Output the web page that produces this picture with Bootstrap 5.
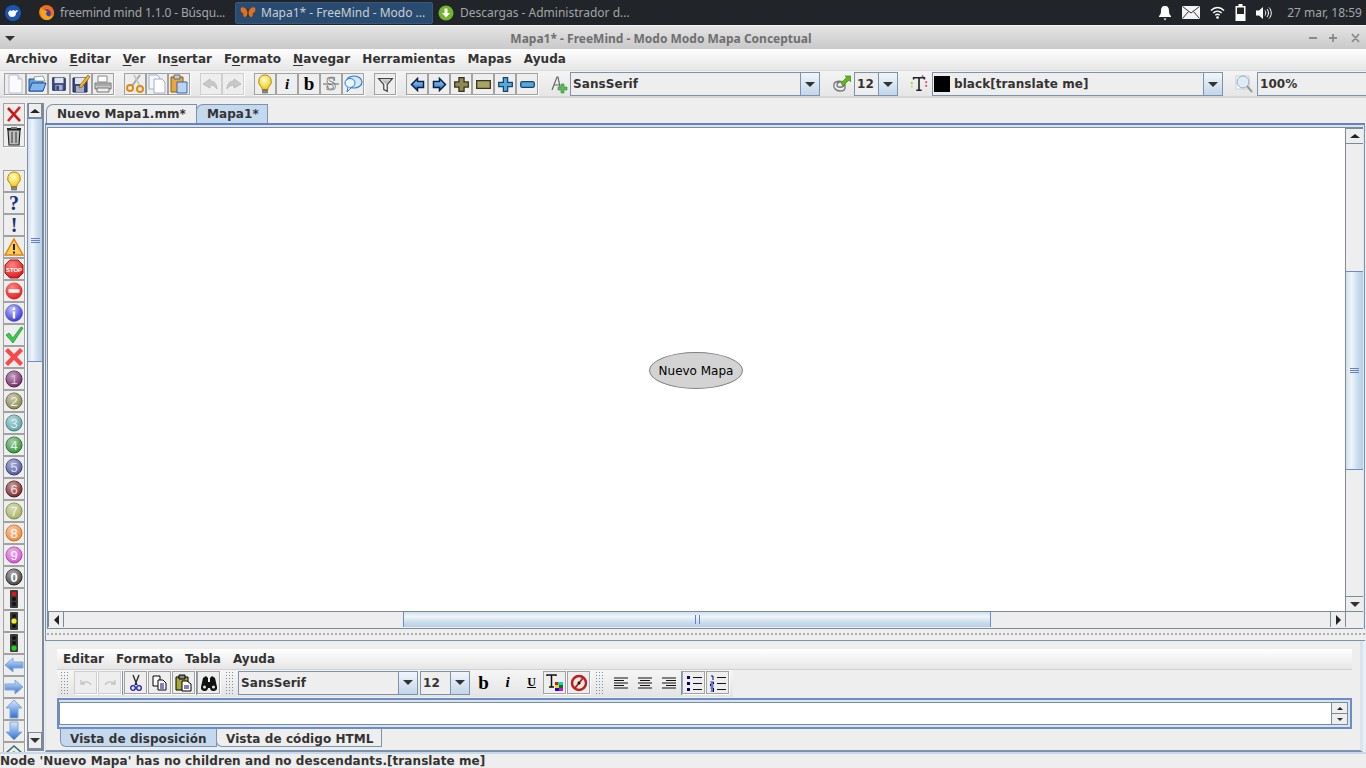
<!DOCTYPE html>
<html lang="es">

<head>
    <meta charset="utf-8">
    <title>Mapa1* - FreeMind</title>
    <link href="https://cdn.jsdelivr.net/npm/bootstrap@5.3.2/dist/css/bootstrap.min.css" rel="stylesheet">
    <style>
        html, body { width: 1366px; height: 768px; overflow: hidden; }
        body { background: #eee; color: #333; font: bold 12px/1 "DejaVu Sans", sans-serif; letter-spacing: .07px; }
        svg { display: block; }

        /* panel del escritorio */
        .desk-panel { height: 25px; background: #212529; color: #a3a6a8; font: 12px "Noto Sans", sans-serif; letter-spacing: 0; }
        .task-item { height: 25px; }
        .task-first { width: 197px; margin-left: 14px; padding-left: 2px; letter-spacing: -.14px; }
        .task-active { width: 198px; height: 22px; margin-left: 2px; padding-left: 4px; background: #2a4b70; border: 1px solid #35597f; border-radius: 2px; color: #c9ced3; }
        .task-last { margin-left: 5px; }
        .task-text { margin-left: 5px; white-space: nowrap; }
        .task-last .task-text { margin-left: 6px; }
        .tray { margin-left: auto; }
        .tray-time { margin: 0 4px 0 15px; }
        .tray-gap { margin-left: 10px; }

        /* ventana */
        .win-title { height: 24px; padding: 1px 44px 0 0; border-top: 1px solid #f4f4f4; background: linear-gradient(#e4e4e4, #c9c9c9); color: #6f6f6f; font: bold 12px "Noto Sans", sans-serif; letter-spacing: 0; position: relative; }
        .win-menu { position: absolute; left: 5px; top: 10px; border-top-color: #777; }
        .win-btns { position: absolute; right: 6px; top: 5px; }
        .main-menu { height: 21px; padding: 0 0 2px 6px; gap: 12px; background: linear-gradient(#fff, #e6e6e6); }
        .main-menu span u { text-underline-offset: 2px; }
        .main-tools { height: 28px; padding: 2px 0 0 4px; border-top: 1px solid #ddd; border-bottom: 2px solid #d6d6d6; background: linear-gradient(#f4f4f4, #e6e6e6); }
        .sq-btn { width: 22px; height: 22px; padding: 0; margin: 0; border: 1px solid #a2a2a2; border-radius: 0; background: #eee; box-shadow: 1px 1px 0 #fff; flex: none; color: #000; --bs-btn-active-border-color: #a2a2a2; }
        .sq-btn svg { margin: auto; }
        .sq-btn.flat { border-color: transparent; box-shadow: none; background: none; }
        .sq-btn.faint { border-color: #cfcfcf; }
        .gap-a { margin-left: 10px; }
        .serif-i { font: italic bold 15px "Liberation Serif", serif; }
        .serif-b { font: bold 19px/18px "Liberation Serif", serif; }
        .serif-u { font: bold 12px "Liberation Serif", serif; text-decoration: underline; }
        .mark-q { font: bold 20px/20px "Liberation Serif", serif; color: #16307a; overflow: hidden; }

        /* combos */
        .combo { height: 24px; margin-top: -1px; border: 1px solid #7c93ae; background: #eee; flex: none; padding-left: 2px; overflow: hidden; }
        .combo-arrow { width: 19px; height: 22px; margin-left: auto; flex: none; border-left: 1px solid #7c93ae; background: linear-gradient(#f1f6fb, #c3d6ea); }
        .combo-font { width: 250px; }
        .combo-size { width: 44px; margin-left: 2px; }
        .combo-color { width: 291px; margin-left: 2px; }
        .combo-zoom { width: 109px; margin-left: 2px; border-right: 0; }
        .swatch { width: 16px; height: 16px; margin: 0 4px 0 -1px; background: #000; }
        .tri { width: 0; height: 0; border-left: 5px solid transparent; border-right: 5px solid transparent; border-top: 5px solid #333; }
        .tri-up { border-top: 0; border-bottom: 4px solid #222; }
        .tri-left { border-left: 0; border-right: 5px solid #222; border-top: 5px solid transparent; border-bottom: 5px solid transparent; }
        .tri-right { border-right: 0; border-left: 5px solid #222; border-top: 5px solid transparent; border-bottom: 5px solid transparent; }

        /* zona de trabajo */
        .work { height: 654px; }
        .icon-col { width: 27px; padding: 5px 0 0 3px; overflow: hidden; flex: none; }
        .icon-space { height: 23px; flex: none; }
        .side-scroll { width: 17px; margin-top: 5px; height: 648px; border-left: 1px solid #7c93ae; border-right: 2px solid #7c8a99; border-bottom: 2px solid #7c8a99; flex: none; }
        .side-top { height: 15px; border-width: 1px 0 0 0; }
        .side-end { height: 17px; border-width: 1px 0 0 0; }
        .right-side { width: 1321px; padding-left: 1px; }

        .sb-btn { background: #eee; border: 1px solid #7c8a99; flex: none; }
        .vbar { width: 17px; flex: none; }
        .vbar .sb-btn { height: 16px; border-left: 0; border-right: 0; }
        .vthumb { background: linear-gradient(90deg, #cfdff0, #f0f5fa 30%, #c9dbee 70%, #b9cfe6); border-top: 1px solid #6d8ec4; border-bottom: 1px solid #6d8ec4; flex: none; }
        .side-thumb { height: 244px; }
        .map-thumb { height: 199px; margin-top: 127px; }
        .grip-v { width: 9px; height: 5px; border-top: 1px solid #6382bf; border-bottom: 1px solid #6382bf; position: relative; }
        .grip-h { width: 5px; height: 9px; border-left: 1px solid #6382bf; border-right: 1px solid #6382bf; }
        .grip-v::after { content: ""; position: absolute; left: 0; right: 0; top: 1px; border-top: 1px solid #6382bf; }

        .map-tabs { height: 19px; padding-left: 1px; margin-top: 6px; border: 0; flex-wrap: nowrap; }
        .map-tab { height: 19px; padding: 3px 10px 0; border: 1px solid #7c93ae; border-bottom: 0; border-top-left-radius: 7px; background: #eee; white-space: nowrap; }
        .tab-one { width: 151px; }
        .tab-two { width: 72px; margin-left: -1px; }
        .tab-on { background: #c5d9ee; }

        .map-frame { height: 506px; border-top: 2px solid #6382bf; background: #d8e4f1; padding: 2px 0 0 1px; border-left: 1px solid #7c93ae; border-right: 1px solid #7c93ae; }
        .map-inner { height: 502px; width: 1316px; border-top: 1px solid #7c8a99; border-left: 1px solid #7c8a99; border-bottom: 1px solid #7c8a99; background: #eee; }
        .map-canvas { width: 1298px; height: 484px; background: #fff; position: relative; flex: none; border-bottom: 1px solid #7c8a99; border-right: 1px solid #7c8a99; }
        .node-root { position: absolute; left: 601px; top: 224px; width: 94px; height: 37px; border: 1px solid #808080; border-radius: 50%; background: #d3d3d3; color: #000; font: 12px "DejaVu Sans", sans-serif; letter-spacing: 0; }
        .hbar { height: 16px; width: 1298px; background: #eee; }
        .hbar .sb-btn { width: 16px; border-top: 0; border-bottom: 0; height: 15px; }
        .hthumb { width: 588px; height: 15px; margin-left: 339px; background: linear-gradient(#cfdff0, #f0f5fa 30%, #c9dbee 70%, #b9cfe6); border-left: 1px solid #6d8ec4; border-right: 1px solid #6d8ec4; margin-right: auto; }

        .split-bar { height: 12px; border-bottom: 1px solid #7c93ae; background: radial-gradient(circle, #8a8a8a 0.6px, transparent 0.9px) 0 3px / 4px 4px repeat-x; border-left: 1px solid #7c93ae; }
        .edit-panel { height: 111px; width: 1318px; padding: 8px 0 0 11px; border-left: 1px solid #d8e4f1; border-right: 3px solid #d8e4f1; border-bottom: 2px solid #7c93ae; }
        .edit-menu { width: 1295px; height: 21px; padding: 0 0 1px 6px; gap: 12px; background: linear-gradient(#fff, #e6e6e6); border-bottom: 1px solid #d0d0d0; }
        .edit-tools { height: 27px; width: 676px; padding: 0 0 2px 3px; background: linear-gradient(#f6f6f6, #e4e4e4); }
        .edit-tools .sq-btn { width: 23px; height: 23px; margin-right: 1px; }
        .edit-tools .sq-btn.serif-u { margin-right: 0; }
        .edit-tools .combo { margin-top: 0; }
        .grip-dots { width: 10px; height: 24px; background: radial-gradient(circle, #7f8c99 0.7px, transparent 1px) 0 0 / 3px 3px; flex: none; }
        .rule-v { width: 1px; height: 24px; background: #7c93ae; flex: none; }
        .rule-wide { margin-right: 1px; }
        .combo-efont { width: 180px; margin: 0 2px 0 3px; }
        .combo-esize { width: 50px; margin-right: 2px; }
        .edit-box { width: 1295px; height: 31px; margin-top: 1px; border: 2px solid #6d8ec4; padding: 2px 2px 2px 0; background: #d8e4f1; }
        .edit-field { height: 23px; background: #fff; border: 1px solid #7c8a99; }
        .spin { width: 16px; margin-left: auto; border-left: 1px solid #7c8a99; background: #eee; }
        .spin-part { height: 11px; }
        .spin-part + .spin-part { border-top: 1px solid #7c8a99; }
        .spin-part .tri { border-left-width: 3px; border-right-width: 3px; }
        .spin-part .tri:not(.tri-up) { border-top-width: 3px; }
        .spin-part .tri-up { border-bottom-width: 3px; }
        .edit-tabs { padding-left: 3px; border: 0; flex-wrap: nowrap; }
        .edit-tab { height: 18px; padding: 4px 9px 0; border: 1px solid #7c93ae; border-top: 0; border-bottom-left-radius: 6px; background: #eee; white-space: nowrap; }
        .tab-lay { width: 157px; background: #c5d9ee; }
        .tab-code { width: 166px; margin-left: -1px; }

        .status-line { height: 16px; border-top: 2px solid #c9d9eb; padding-top: 1px; white-space: nowrap; }
    </style>
</head>

<body>
    <!-- iconos reutilizados -->
    <svg width="0" height="0" class="position-absolute">
        <defs>
            <linearGradient id="blueArrow" x1="0" y1="0" x2="0" y2="1"><stop offset="0" stop-color="#a9d4f7"/><stop offset="1" stop-color="#1c6fc9"/></linearGradient>
            <linearGradient id="paleBlue" x1="0" y1="0" x2="0" y2="1"><stop offset="0" stop-color="#dbe8fb"/><stop offset="1" stop-color="#2e6fd0"/></linearGradient>
            <radialGradient id="bulbGlow" cx=".45" cy=".35" r=".7"><stop offset="0" stop-color="#ffffd0"/><stop offset="1" stop-color="#f2c600"/></radialGradient>
            <radialGradient id="redBall" cx=".4" cy=".3" r=".8"><stop offset="0" stop-color="#ff8a80"/><stop offset="1" stop-color="#d80f12"/></radialGradient>
            <radialGradient id="blueBall" cx=".4" cy=".3" r=".8"><stop offset="0" stop-color="#c6c6ff"/><stop offset="1" stop-color="#2222d8"/></radialGradient>
            <radialGradient id="gloss" cx=".4" cy=".3" r=".7"><stop offset="0" stop-color="#fff" stop-opacity=".55"/><stop offset="1" stop-color="#fff" stop-opacity="0"/></radialGradient>

            <symbol id="i-new" viewBox="0 0 20 20"><path d="M4 1h9l4 4v14H4z" fill="#fbfbff" stroke="#b9bfd0"/><path d="M13 1v4h4" fill="#dfe3ee" stroke="#b9bfd0"/></symbol>
            <symbol id="i-open" viewBox="0 0 20 20"><path d="M2 5h6l1 2h7v10H2z" fill="#5f9fe0" stroke="#1d4f9a"/><path d="M7 3l9-1 2 5H8z" fill="#fff" stroke="#8aa"/><path d="M2 17l3-8h14l-3 8z" fill="#7fb4ec" stroke="#1d4f9a"/></symbol>
            <symbol id="i-save" viewBox="0 0 20 20"><path d="M3 3h13l1 1v13H3z" fill="#3a4a80" stroke="#1c2450"/><path d="M5 3h10v6H5z" fill="#dfe4f2"/><path d="M6 11h8v6H6z" fill="#a6aecb"/><path d="M7 12h3v5H7z" fill="#3a4a80"/></symbol>
            <symbol id="i-saveas" viewBox="0 0 20 20"><path d="M2 4h14v14H2z" fill="#3a4a80" stroke="#1c2450"/><path d="M4 4h10v6H4z" fill="#dfe4f2"/><path d="M5 12h8v6H5z" fill="#a6aecb"/><path d="M17 1l2 2-8 10-3 1 1-3z" fill="#f6b52a" stroke="#8a5a00" stroke-width=".7"/></symbol>
            <symbol id="i-print" viewBox="0 0 20 20"><path d="M5 2h9v6H5z" fill="#fff" stroke="#888"/><path d="M2 9h16v6H2z" fill="#c9c9c9" stroke="#777"/><path d="M4 14h12v4H4z" fill="#eee" stroke="#777"/><path d="M3 11h14" stroke="#888"/></symbol>
            <symbol id="i-cut" viewBox="0 0 20 20"><path d="M15 1L7 12" stroke="#a8a8a8" stroke-width="2"/><path d="M9 1l6 11" stroke="#c8c8c8" stroke-width="2"/><circle cx="5" cy="14" r="3" fill="none" stroke="#e08a10" stroke-width="2"/><circle cx="15" cy="15" r="3" fill="none" stroke="#e08a10" stroke-width="2"/></symbol>
            <symbol id="i-copy" viewBox="0 0 20 20"><path d="M2 1h8l3 3v11H2z" fill="#f6f6ff" stroke="#a6acc4"/><path d="M7 5h8l3 3v11H7z" fill="#fff" stroke="#a6acc4"/></symbol>
            <symbol id="i-paste" viewBox="0 0 20 20"><path d="M2 3h12v15H2z" fill="#e9a63c" stroke="#8a5a10"/><path d="M5 1h6v4H5z" fill="#c9c9d8" stroke="#667"/><path d="M8 8h10v11H8z" fill="#bcd4f4" stroke="#3a66a8"/></symbol>
            <symbol id="i-undo" viewBox="0 0 20 20"><path d="M9 5L2 10l7 4v-3c3 0 5 1 7 4 0-5-3-8-7-8z" fill="#c9c9c9" stroke="#bbb"/></symbol>
            <symbol id="i-redo" viewBox="0 0 20 20"><path d="M11 5l7 5-7 4v-3c-3 0-5 1-7 4 0-5 3-8 7-8z" fill="#c9c9c9" stroke="#bbb"/></symbol>
            <symbol id="i-bulb" viewBox="0 0 20 20"><path d="M10 1a6.500 6.500 0 0 0-4 11.500c1 1 1 2 1 3h6c0-1 0-2 1-3A6.500 6.500 0 0 0 10 1z" fill="url(#bulbGlow)" stroke="#b58a00"/><path d="M7.500 16h5v3h-5z" fill="#8d8d8d" stroke="#555" stroke-width=".6"/></symbol>
            <symbol id="i-bubble" viewBox="0 0 20 20"><ellipse cx="11" cy="8" rx="8" ry="6" fill="#d4e8fb" stroke="#2f7fd0" stroke-width="1.200"/><ellipse cx="7" cy="9" rx="5" ry="4.500" fill="#eaf4fd" stroke="#2f7fd0" stroke-width="1"/><path d="M5 13l-1 5 4-4" fill="#eaf4fd" stroke="#2f7fd0"/></symbol>
            <symbol id="i-filter" viewBox="0 0 20 20"><path d="M2 3h16l-6 7v8l-4-2v-6z" fill="#fff" stroke="#444" stroke-width="1.500"/><path d="M5 5h10l-4 5" fill="#bbb"/></symbol>
            <symbol id="i-left" viewBox="0 0 20 20"><path d="M2 10l8-8v4h8v8h-8v4z" fill="url(#blueArrow)" stroke="#0a1f44" stroke-width="2"/></symbol>
            <symbol id="i-right" viewBox="0 0 20 20"><path d="M18 10l-8-8v4H2v8h8v4z" fill="url(#blueArrow)" stroke="#0a1f44" stroke-width="2"/></symbol>
            <symbol id="i-plus-o" viewBox="0 0 20 20"><path d="M7 2h6v5h5v6h-5v5H7v-5H2V7h5z" fill="#8f8a52" stroke="#35331a" stroke-width="1.500"/></symbol>
            <symbol id="i-minus-o" viewBox="0 0 20 20"><path d="M2 5.500h16v9H2z" fill="#a9a463" stroke="#35331a" stroke-width="1.500"/></symbol>
            <symbol id="i-plus-b" viewBox="0 0 20 20"><path d="M7.500 2h5v5.500H18v5h-5.500V18h-5v-5.500H2v-5h5.500z" fill="#5aa6dc" stroke="#12466e" stroke-width="1.500"/></symbol>
            <symbol id="i-minus-b" viewBox="0 0 20 20"><rect x="2" y="6.500" width="16" height="7" rx="2" fill="#5aa6dc" stroke="#12466e" stroke-width="1.500"/></symbol>
            <symbol id="i-fonta" viewBox="0 0 20 20"><path d="M3 16L8 3h1l2 10M5 11h5" fill="none" stroke="#666" stroke-width="1.200"/><path d="M12 10h3v3h3v3h-3v3h-3v-3H9v-3h3z" fill="#5cb85c" stroke="#2f8f2f" stroke-width=".6"/></symbol>
            <symbol id="i-linka" viewBox="0 0 20 20"><path d="M13 9c-3-3-9-2-10 1-1 4 2 7 6 7 3 0 5-1 5-3V9c0-2-8-2-8 2 0 3 6 3 7 0" fill="none" stroke="#777" stroke-width="1.300"/><path d="M10 9l6-6-2-1h6v6l-2-2-6 6z" fill="#62b818" stroke="#2f7f0a" stroke-width=".6"/></symbol>
            <symbol id="i-tcolor" viewBox="0 0 20 20"><path d="M4 5V3h12v2M10 3v14M7 17h6" stroke="#222" stroke-width="1.800" fill="none"/><circle cx="2" cy="9" r="1.200" fill="#7be04c"/><circle cx="2" cy="13" r="1.200" fill="#d5e04c"/><circle cx="18" cy="8" r="1.200" fill="#e04c9a"/><circle cx="18" cy="12" r="1.200" fill="#e0504c"/><circle cx="14" cy="1.500" r="1.200" fill="#9a4ce0"/></symbol>
            <symbol id="i-zoom" viewBox="0 0 20 20"><path d="M2 2h13v13H2z" fill="#fff" stroke="#ccc"/><circle cx="9" cy="8" r="6" fill="#dcecf8" stroke="#9ab"/><path d="M13 12l5 6" stroke="#999" stroke-width="2"/></symbol>
            <symbol id="i-redx" viewBox="0 0 20 20"><path d="M4 4l12 13M16 3L4 17" stroke="#e01b1b" stroke-width="2.600"/><path d="M4 4l12 13" stroke="#222" stroke-width=".5"/></symbol>
            <symbol id="i-trash" viewBox="0 0 20 20"><path d="M4 4h12l-1 15H5z" fill="#bdbdbd" stroke="#222" stroke-width="1.200"/><path d="M3 3l14 0" stroke="#222" stroke-width="2"/><path d="M8 6v11M12 6v11" stroke="#333"/><path d="M7 2h6" stroke="#777" stroke-width="2"/></symbol>
            <symbol id="i-warn" viewBox="0 0 20 20"><path d="M10 2l9 16H1z" fill="#ffcf4a" stroke="#e0801a" stroke-width="1.500"/><path d="M10 7v6" stroke="#222" stroke-width="2"/><path d="M10 14.500v2" stroke="#222" stroke-width="2"/></symbol>
            <symbol id="i-stop" viewBox="0 0 20 20"><path d="M6 1h8l5 5v8l-5 5H6l-5-5V6z" fill="url(#redBall)" stroke="#b01010"/><text x="10" y="12.500" font-size="6" font-weight="bold" fill="#fff" text-anchor="middle" font-family="Liberation Sans">STOP</text></symbol>
            <symbol id="i-noentry" viewBox="0 0 20 20"><circle cx="10" cy="10" r="8.500" fill="url(#redBall)"/><path d="M4.500 8.300h11v3.400h-11z" fill="#fff"/></symbol>
            <symbol id="i-info" viewBox="0 0 20 20"><circle cx="10" cy="10" r="8.500" fill="url(#blueBall)" stroke="#4040a0" stroke-width=".5"/><path d="M8.800 8.500h2.400v7H8.800zM8.800 4.500h2.400v2.400H8.800z" fill="#fff"/></symbol>
            <symbol id="i-check" viewBox="0 0 20 20"><path d="M2 10l3-2 4 5L17 2l2 1L9 18z" fill="#3cc94c" stroke="#1a8a2a" stroke-width=".7"/></symbol>
            <symbol id="i-crossr" viewBox="0 0 20 20"><path d="M4 1l6 6 6-6 3 3-6 6 6 6-3 3-6-6-6 6-3-3 6-6-6-6z" fill="#f64a4a" stroke="#ff8f8f" stroke-width=".5"/></symbol>
            <symbol id="i-tl" viewBox="0 0 20 20"><rect x="6" y="1" width="8" height="18" rx="1" fill="#3a3a3a"/></symbol>
            <symbol id="i-aleft" viewBox="0 0 20 20"><path d="M1 10l8-7v4h10v6H9v4z" fill="url(#paleBlue)" stroke="#7fa8e0"/></symbol>
            <symbol id="i-aright" viewBox="0 0 20 20"><path d="M19 10l-8-7v4H1v6h10v4z" fill="url(#paleBlue)" stroke="#7fa8e0"/></symbol>
            <symbol id="i-aup" viewBox="0 0 20 20"><path d="M10 1l8 8h-4v10H6V9H2z" fill="url(#paleBlue)" stroke="#7fa8e0"/></symbol>
            <symbol id="i-adown" viewBox="0 0 20 20"><path d="M10 19l8-8h-4V1H6v10H2z" fill="url(#paleBlue)" stroke="#7fa8e0"/></symbol>
            <symbol id="i-ecut" viewBox="0 0 18 18"><path d="M6 1l4 10M12 1L8 11" stroke="#222" stroke-width="1.300"/><circle cx="6" cy="14" r="2.300" fill="none" stroke="#1c1cb0" stroke-width="1.300"/><circle cx="12" cy="14" r="2.300" fill="none" stroke="#1c1cb0" stroke-width="1.300"/></symbol>
            <symbol id="i-ecopy" viewBox="0 0 18 18"><path d="M2 2h7v10H2z" fill="#fff" stroke="#000"/><path d="M7 6h5l3 3v7H7z" fill="#fff" stroke="#000"/><path d="M9 10h4M9 12h4M9 14h4" stroke="#00007f"/></symbol>
            <symbol id="i-epaste" viewBox="0 0 18 18"><path d="M1 3h12v13H1z" fill="#a8a838" stroke="#000"/><path d="M4 1h6v4H4z" fill="#888" stroke="#000"/><path d="M7 7h5l4 3v7H7z" fill="#fff" stroke="#000"/><path d="M9 12h5M9 14h5" stroke="#00007f"/></symbol>
            <symbol id="i-find" viewBox="0 0 18 18"><path d="M3 4l3-2 2 2v4h2V4l2-2 3 2 2 9a3 3 0 0 1-7 1h-2a3 3 0 0 1-7-1z" fill="#111"/><circle cx="4.500" cy="13" r="1.600" fill="#ddd"/><circle cx="13.500" cy="13" r="1.600" fill="#ddd"/></symbol>
            <symbol id="i-eundo" viewBox="0 0 18 18"><path d="M4 6v4h4M4 10c2-3 8-3 10 1" fill="none" stroke="#c4c4c4" stroke-width="1.300"/></symbol>
            <symbol id="i-eredo" viewBox="0 0 18 18"><path d="M14 6v4h-4M14 10c-2-3-8-3-10 1" fill="none" stroke="#c4c4c4" stroke-width="1.300"/></symbol>
            <symbol id="i-etcol" viewBox="0 0 20 20"><path d="M2 3V2h9v1M6.500 2v12M4 14h5" stroke="#111" stroke-width="1.500" fill="none"/><path d="M10 9h3v3h-3z" fill="#e01010"/><path d="M13 9h5v3h-5z" fill="#10d0d0"/><path d="M10 12h4v3h-4z" fill="#e0e010"/><path d="M14 12h4v3h-4z" fill="#107010"/><path d="M10 15h4v3h-4z" fill="#1010c0"/><path d="M14 15h4v3h-4z" fill="#d010d0"/></symbol>
            <symbol id="i-eno" viewBox="0 0 20 20"><circle cx="10" cy="10" r="7" fill="#f4e9e0" stroke="#b82020" stroke-width="2.500"/><path d="M6 15L14 5" stroke="#b82020" stroke-width="2"/><path d="M9 9l2 2" stroke="#111" stroke-width="2"/></symbol>
            <symbol id="i-al" viewBox="0 0 18 18"><path d="M2 4h14M2 6.500h10M2 9h14M2 11.500h10M2 14h14" stroke="#111" stroke-width="1.100"/></symbol>
            <symbol id="i-ac" viewBox="0 0 18 18"><path d="M2 4h14M4 6.500h10M2 9h14M4 11.500h10M2 14h14" stroke="#111" stroke-width="1.100"/></symbol>
            <symbol id="i-ar" viewBox="0 0 18 18"><path d="M2 4h14M6 6.500h10M2 9h14M6 11.500h10M2 14h14" stroke="#111" stroke-width="1.100"/></symbol>
            <symbol id="i-ul" viewBox="0 0 18 18"><path d="M2 2h3v3H2zM2 8h3v3H2zM2 14h3v3H2z" fill="#00007f"/><path d="M8 3.500h9M8 9.500h9M8 15.500h9" stroke="#111" stroke-width="1.100"/></symbol>
            <symbol id="i-ol" viewBox="0 0 18 18"><path d="M2 2h2v4M1.500 8h3v2h-3v2h3M1.500 14h3v4h-3M2 16h2" fill="none" stroke="#00007f"/><path d="M8 3.500h9M8 9.500h9M8 15.500h9" stroke="#111" stroke-width="1.100"/></symbol>
        </defs>
    </svg>

    <div class="desk-panel d-flex align-items-center">
        <svg class="ms-1" width="18" height="18" viewBox="0 0 18 18"><circle cx="9" cy="9" r="8" fill="#1b57b0"/><path d="M4 9l2-3 1 1 3-1 1 1 2-1 1 1-2 2c0 3-2 4-4 4-2 0-3-1-4-4z" fill="#fff"/></svg>
        <div class="task-item task-first d-flex align-items-center">
            <svg width="17" height="17" viewBox="0 0 18 18"><circle cx="9" cy="9" r="8" fill="#f26a1b"/><circle cx="9" cy="10" r="4.500" fill="#3a3fae"/><path d="M3 4c-2 5 0 12 6 13 5 0 8-4 8-8-1 4-4 5-6 4-3-1-3-4-1-5-2-2-4-1-7-4z" fill="#f4a21c"/></svg>
            <span class="task-text">freemind mind 1.1.0 - Búsqu...</span>
        </div>
        <div class="task-active d-flex align-items-center">
            <svg width="16" height="13" viewBox="0 0 18 14"><path d="M9 7C7 2 3 0 1 2c-1 3 1 6 3 6-1 2 0 4 2 4 2-1 3-3 3-5zM9 7c2-5 6-7 8-5 1 3-1 6-3 6 1 2 0 4-2 4-2-1-3-3-3-5z" fill="#e8701a"/><path d="M9 3v9" stroke="#222"/></svg>
            <span class="task-text">Mapa1* - FreeMind - Modo ...</span>
        </div>
        <div class="task-last d-flex align-items-center">
            <svg width="16" height="16" viewBox="0 0 16 16"><circle cx="8" cy="8" r="7.500" fill="#70b52a"/><path d="M6.500 3.500h3V8H12l-4 4.500L4 8h2.500z" fill="#fff"/></svg>
            <span class="task-text">Descargas - Administrador d...</span>
        </div>
        <div class="tray d-flex align-items-center">
            <svg width="14" height="16" viewBox="0 0 14 16"><path d="M7 1c3 0 4 2 4 5 0 3 1 4 2 5v1H1v-1c1-1 2-2 2-5 0-3 1-5 4-5zM5.500 13.500h3L7 15.500z" fill="#fff"/></svg>
            <svg class="tray-gap" width="18" height="13" viewBox="0 0 18 13"><path d="M0 0h18v13H0z" fill="#f4f4f4"/><path d="M.500.500L9 7l8.500-6.500M.500 12.500L6.500 5.500M17.500 12.500l-6-7" fill="none" stroke="#333"/></svg>
            <svg class="tray-gap" width="15" height="13" viewBox="0 0 15 13"><path d="M1 4.500c4-4 9-4 13 0M3.200 7c2.500-2.500 6-2.500 8.500 0M5.300 9.200c1.300-1.200 3-1.200 4.300 0" fill="none" stroke="#fff" stroke-width="1.500"/><circle cx="7.500" cy="11.500" r="1.300" fill="#fff"/></svg>
            <svg class="tray-gap" width="11" height="17" viewBox="0 0 11 17"><path d="M3.500 0h4v2h3v15H.500V2h3z" fill="#fff"/><path d="M2 3.500h7V10H2z" fill="#212529"/></svg>
            <svg class="tray-gap" width="16" height="14" viewBox="0 0 16 14"><path d="M0 4.500h3L7 1v12L3 9.500H0z" fill="#fff"/><path d="M9 4.500c1 1.500 1 3.500 0 5M11 3c2 2.500 2 5.500 0 8M13 1.500c3 3 3 8 0 11" fill="none" stroke="#fff"/></svg>
            <span class="tray-time">27 mar, 18:59</span>
        </div>
    </div>

    <div class="win-title d-flex align-items-center justify-content-center">
        <span class="win-menu tri"></span>
        <span>Mapa1* - FreeMind - Modo Modo Mapa Conceptual</span>
        <svg class="win-btns" width="52" height="14" viewBox="0 0 52 14"><path d="M1 7h8M21 7h8M25 3v8M44 3l7 8M51 3l-7 8" stroke="#8a8a8a" stroke-width="1.800"/></svg>
    </div>

    <nav class="main-menu d-flex align-items-center">
        <span>Archivo</span><span><u>E</u>ditar</span><span><u>V</u>er</span><span>In<u>s</u>ertar</span><span>F<u>o</u>rmato</span><span><u>N</u>avegar</span><span>Herramientas</span><span>Mapas</span><span>Ayuda</span>
    </nav>

    <div class="main-tools d-flex">
        <button class="btn sq-btn"><svg width="20" height="20"><use href="#i-new"/></svg></button>
        <button class="btn sq-btn"><svg width="20" height="20"><use href="#i-open"/></svg></button>
        <button class="btn sq-btn"><svg width="18" height="18"><use href="#i-save"/></svg></button>
        <button class="btn sq-btn"><svg width="20" height="20"><use href="#i-saveas"/></svg></button>
        <button class="btn sq-btn"><svg width="20" height="20"><use href="#i-print"/></svg></button>
        <button class="btn sq-btn gap-a"><svg width="20" height="20"><use href="#i-cut"/></svg></button>
        <button class="btn sq-btn"><svg width="20" height="20"><use href="#i-copy"/></svg></button>
        <button class="btn sq-btn"><svg width="20" height="20"><use href="#i-paste"/></svg></button>
        <button class="btn sq-btn faint gap-a"><svg width="20" height="20"><use href="#i-undo"/></svg></button>
        <button class="btn sq-btn faint"><svg width="20" height="20"><use href="#i-redo"/></svg></button>
        <button class="btn sq-btn gap-a"><svg width="20" height="20"><use href="#i-bulb"/></svg></button>
        <button class="btn sq-btn serif-i">i</button>
        <button class="btn sq-btn serif-b">b</button>
        <button class="btn sq-btn"><svg width="20" height="20" viewBox="0 0 20 20"><text x="10" y="16" font-size="18" font-family="Liberation Serif" font-weight="bold" text-anchor="middle" fill="#fff" stroke="#666" stroke-width=".7">S</text><path d="M2 10h16" stroke="#666"/></svg></button>
        <button class="btn sq-btn"><svg width="20" height="20"><use href="#i-bubble"/></svg></button>
        <button class="btn sq-btn gap-a"><svg width="17" height="17"><use href="#i-filter"/></svg></button>
        <button class="btn sq-btn gap-a"><svg width="15" height="15"><use href="#i-left"/></svg></button>
        <button class="btn sq-btn"><svg width="15" height="15"><use href="#i-right"/></svg></button>
        <button class="btn sq-btn"><svg width="17" height="17"><use href="#i-plus-o"/></svg></button>
        <button class="btn sq-btn"><svg width="17" height="17"><use href="#i-minus-o"/></svg></button>
        <button class="btn sq-btn"><svg width="17" height="17"><use href="#i-plus-b"/></svg></button>
        <button class="btn sq-btn"><svg width="17" height="17"><use href="#i-minus-b"/></svg></button>
        <button class="btn sq-btn flat gap-a"><svg width="20" height="20"><use href="#i-fonta"/></svg></button>
        <div class="combo combo-font d-flex align-items-center"><span>SansSerif</span><span class="combo-arrow d-flex align-items-center justify-content-center"><span class="tri"></span></span></div>
        <button class="btn sq-btn flat gap-a"><svg width="20" height="20"><use href="#i-linka"/></svg></button>
        <div class="combo combo-size d-flex align-items-center"><span>12</span><span class="combo-arrow d-flex align-items-center justify-content-center"><span class="tri"></span></span></div>
        <button class="btn sq-btn flat gap-a"><svg width="18" height="18"><use href="#i-tcolor"/></svg></button>
        <div class="combo combo-color d-flex align-items-center"><span class="swatch"></span><span>black[translate me]</span><span class="combo-arrow d-flex align-items-center justify-content-center"><span class="tri"></span></span></div>
        <button class="btn sq-btn flat gap-a"><svg width="20" height="20"><use href="#i-zoom"/></svg></button>
        <div class="combo combo-zoom d-flex align-items-center"><span>100%</span></div>
    </div>

    <div class="work d-flex">
        <div class="icon-col d-flex flex-column">
            <button class="btn sq-btn"><svg width="20" height="20"><use href="#i-redx"/></svg></button>
            <button class="btn sq-btn"><svg width="20" height="20"><use href="#i-trash"/></svg></button>
            <div class="icon-space"></div>
            <button class="btn sq-btn"><svg width="20" height="20"><use href="#i-bulb"/></svg></button>
            <button class="btn sq-btn mark-q">?</button>
            <button class="btn sq-btn mark-q">!</button>
            <button class="btn sq-btn"><svg width="20" height="20"><use href="#i-warn"/></svg></button>
            <button class="btn sq-btn"><svg width="20" height="20"><use href="#i-stop"/></svg></button>
            <button class="btn sq-btn"><svg width="20" height="20"><use href="#i-noentry"/></svg></button>
            <button class="btn sq-btn"><svg width="20" height="20"><use href="#i-info"/></svg></button>
            <button class="btn sq-btn"><svg width="20" height="20"><use href="#i-check"/></svg></button>
            <button class="btn sq-btn"><svg width="20" height="20"><use href="#i-crossr"/></svg></button>
            <button class="btn sq-btn"><svg width="20" height="20" viewBox="0 0 20 20"><circle cx="10" cy="10" r="8" fill="#7a2f72" stroke="#4a1c48"/><circle cx="10" cy="10" r="8" fill="url(#gloss)"/><text x="10" y="15" font-size="13" text-anchor="middle" fill="#d8c0d8" font-family="Liberation Sans">1</text></svg></button>
            <button class="btn sq-btn"><svg width="20" height="20" viewBox="0 0 20 20"><circle cx="10" cy="10" r="8" fill="#8f8a5a" stroke="#5f5c38"/><circle cx="10" cy="10" r="8" fill="url(#gloss)"/><text x="10" y="15" font-size="13" text-anchor="middle" fill="#f4f0d8" font-family="Liberation Sans">2</text></svg></button>
            <button class="btn sq-btn"><svg width="20" height="20" viewBox="0 0 20 20"><circle cx="10" cy="10" r="8" fill="#62a6ac" stroke="#3e7a80"/><circle cx="10" cy="10" r="8" fill="url(#gloss)"/><text x="10" y="15" font-size="13" text-anchor="middle" fill="#d8f0f0" font-family="Liberation Sans">3</text></svg></button>
            <button class="btn sq-btn"><svg width="20" height="20" viewBox="0 0 20 20"><circle cx="10" cy="10" r="8" fill="#3c9442" stroke="#1f6a26"/><circle cx="10" cy="10" r="8" fill="url(#gloss)"/><text x="10" y="15" font-size="13" text-anchor="middle" fill="#e0f4e0" font-family="Liberation Sans">4</text></svg></button>
            <button class="btn sq-btn"><svg width="20" height="20" viewBox="0 0 20 20"><circle cx="10" cy="10" r="8" fill="#555a9e" stroke="#343878"/><circle cx="10" cy="10" r="8" fill="url(#gloss)"/><text x="10" y="15" font-size="13" text-anchor="middle" fill="#dcdcf4" font-family="Liberation Sans">5</text></svg></button>
            <button class="btn sq-btn"><svg width="20" height="20" viewBox="0 0 20 20"><circle cx="10" cy="10" r="8" fill="#7c2c30" stroke="#501418"/><circle cx="10" cy="10" r="8" fill="url(#gloss)"/><text x="10" y="15" font-size="13" text-anchor="middle" fill="#f4dcdc" font-family="Liberation Sans">6</text></svg></button>
            <button class="btn sq-btn"><svg width="20" height="20" viewBox="0 0 20 20"><circle cx="10" cy="10" r="8" fill="#a8b468" stroke="#7a8444"/><circle cx="10" cy="10" r="8" fill="url(#gloss)"/><text x="10" y="15" font-size="13" text-anchor="middle" fill="#f4f8dc" font-family="Liberation Sans">7</text></svg></button>
            <button class="btn sq-btn"><svg width="20" height="20" viewBox="0 0 20 20"><circle cx="10" cy="10" r="8" fill="#f08a3c" stroke="#d06a20"/><circle cx="10" cy="10" r="8" fill="url(#gloss)"/><text x="10" y="15" font-size="13" text-anchor="middle" fill="#fff" font-family="Liberation Sans">8</text></svg></button>
            <button class="btn sq-btn"><svg width="20" height="20" viewBox="0 0 20 20"><circle cx="10" cy="10" r="8" fill="#d45cd0" stroke="#b03cac"/><circle cx="10" cy="10" r="8" fill="url(#gloss)"/><text x="10" y="15" font-size="13" text-anchor="middle" fill="#fff" font-family="Liberation Sans">9</text></svg></button>
            <button class="btn sq-btn"><svg width="20" height="20" viewBox="0 0 20 20"><circle cx="10" cy="10" r="8" fill="#4a4a4a" stroke="#222"/><circle cx="10" cy="10" r="8" fill="url(#gloss)"/><text x="10" y="15" font-size="13" font-weight="bold" text-anchor="middle" fill="#fff" font-family="Liberation Sans">0</text></svg></button>
            <button class="btn sq-btn"><svg width="20" height="20"><use href="#i-tl"/><circle cx="10" cy="5" r="2.300" fill="#f01010"/><circle cx="10" cy="10" r="2" fill="#111"/><circle cx="10" cy="15" r="2" fill="#111"/></svg></button>
            <button class="btn sq-btn"><svg width="20" height="20"><use href="#i-tl"/><circle cx="10" cy="5" r="2" fill="#111"/><circle cx="10" cy="10" r="2.600" fill="#f0f020"/><circle cx="10" cy="15" r="2" fill="#111"/></svg></button>
            <button class="btn sq-btn"><svg width="20" height="20"><use href="#i-tl"/><circle cx="10" cy="5" r="2" fill="#111"/><circle cx="10" cy="10" r="2" fill="#111"/><circle cx="10" cy="15" r="2.600" fill="#20d020"/></svg></button>
            <button class="btn sq-btn"><svg width="20" height="20"><use href="#i-aleft"/></svg></button>
            <button class="btn sq-btn"><svg width="20" height="20"><use href="#i-aright"/></svg></button>
            <button class="btn sq-btn"><svg width="20" height="20"><use href="#i-aup"/></svg></button>
            <button class="btn sq-btn"><svg width="20" height="20"><use href="#i-adown"/></svg></button>
            <button class="btn sq-btn"><svg width="20" height="20" viewBox="0 0 20 20"><path d="M2 10l8-7 8 7M5 14l5-5 5 5" fill="none" stroke="#2f6f5f" stroke-width="1.500"/></svg></button>
        </div>

        <div class="side-scroll d-flex flex-column">
            <div class="sb-btn d-flex align-items-center justify-content-center side-top"><span class="tri tri-up"></span></div>
            <div class="vthumb side-thumb d-flex align-items-center justify-content-center"><span class="grip-v"></span></div>
            <div class="flex-grow-1"></div>
            <div class="sb-btn d-flex align-items-center justify-content-center side-end"><span class="tri"></span></div>
        </div>

        <div class="right-side d-flex flex-column">
            <div class="nav nav-tabs map-tabs">
                <div class="map-tab tab-one">Nuevo Mapa1.mm*</div>
                <div class="map-tab tab-two tab-on">Mapa1*</div>
            </div>
            <div class="map-frame">
                <div class="map-inner">
                    <div class="d-flex">
                        <div class="map-canvas">
                            <div class="node-root d-flex align-items-center justify-content-center">Nuevo Mapa</div>
                        </div>
                        <div class="vbar d-flex flex-column">
                            <div class="sb-btn d-flex align-items-center justify-content-center"><span class="tri tri-up"></span></div>
                            <div class="vthumb map-thumb d-flex align-items-center justify-content-center"><span class="grip-v"></span></div>
                            <div class="flex-grow-1"></div>
                            <div class="sb-btn d-flex align-items-center justify-content-center"><span class="tri"></span></div>
                        </div>
                    </div>
                    <div class="hbar d-flex">
                        <div class="sb-btn d-flex align-items-center justify-content-center"><span class="tri tri-left"></span></div>
                        <div class="hthumb d-flex align-items-center justify-content-center"><span class="grip-h"></span></div>
                        <div class="sb-btn d-flex align-items-center justify-content-center"><span class="tri tri-right"></span></div>
                    </div>
                </div>
            </div>
            <div class="split-bar"></div>
            <div class="edit-panel">
                <nav class="edit-menu d-flex align-items-center"><span>Editar</span><span>Formato</span><span>Tabla</span><span>Ayuda</span></nav>
                <div class="edit-tools d-flex align-items-center">
                    <span class="grip-dots"></span>
                    <button class="btn sq-btn faint ms-1"><svg width="18" height="18"><use href="#i-eundo"/></svg></button>
                    <button class="btn sq-btn faint"><svg width="18" height="18"><use href="#i-eredo"/></svg></button>
                    <span class="rule-v rule-wide"></span>
                    <button class="btn sq-btn"><svg width="18" height="18"><use href="#i-ecut"/></svg></button>
                    <button class="btn sq-btn"><svg width="18" height="18"><use href="#i-ecopy"/></svg></button>
                    <button class="btn sq-btn"><svg width="18" height="18"><use href="#i-epaste"/></svg></button>
                    <span class="rule-v"></span>
                    <button class="btn sq-btn"><svg width="18" height="18"><use href="#i-find"/></svg></button>
                    <span class="grip-dots ms-1"></span>
                    <div class="combo combo-efont d-flex align-items-center"><span>SansSerif</span><span class="combo-arrow d-flex align-items-center justify-content-center"><span class="tri"></span></span></div>
                    <div class="combo combo-esize d-flex align-items-center"><span>12</span><span class="combo-arrow d-flex align-items-center justify-content-center"><span class="tri"></span></span></div>
                    <button class="btn sq-btn flat serif-b">b</button>
                    <button class="btn sq-btn flat serif-i">i</button>
                    <button class="btn sq-btn flat serif-u">U</button>
                    <button class="btn sq-btn"><svg width="20" height="20"><use href="#i-etcol"/></svg></button>
                    <button class="btn sq-btn"><svg width="20" height="20"><use href="#i-eno"/></svg></button>
                    <span class="grip-dots ms-1"></span>
                    <button class="btn sq-btn flat ms-1"><svg width="18" height="18"><use href="#i-al"/></svg></button>
                    <button class="btn sq-btn flat"><svg width="18" height="18"><use href="#i-ac"/></svg></button>
                    <button class="btn sq-btn flat"><svg width="18" height="18"><use href="#i-ar"/></svg></button>
                    <span class="rule-v"></span>
                    <button class="btn sq-btn"><svg width="18" height="18"><use href="#i-ul"/></svg></button>
                    <button class="btn sq-btn"><svg width="18" height="18"><use href="#i-ol"/></svg></button>
                </div>
                <div class="edit-box">
                    <div class="edit-field d-flex">
                        <div class="spin d-flex flex-column">
                            <div class="spin-part d-flex align-items-center justify-content-center"><span class="tri tri-up"></span></div>
                            <div class="spin-part d-flex align-items-center justify-content-center"><span class="tri"></span></div>
                        </div>
                    </div>
                </div>
                <div class="nav nav-tabs edit-tabs">
                    <div class="edit-tab tab-lay">Vista de disposición</div>
                    <div class="edit-tab tab-code">Vista de código HTML</div>
                </div>
            </div>
        </div>
    </div>

    <div class="status-line">Node 'Nuevo Mapa' has no children and no descendants.[translate me]</div>

    <script src="https://cdn.jsdelivr.net/npm/bootstrap@5.3.2/dist/js/bootstrap.bundle.min.js"></script>
</body>

</html>
